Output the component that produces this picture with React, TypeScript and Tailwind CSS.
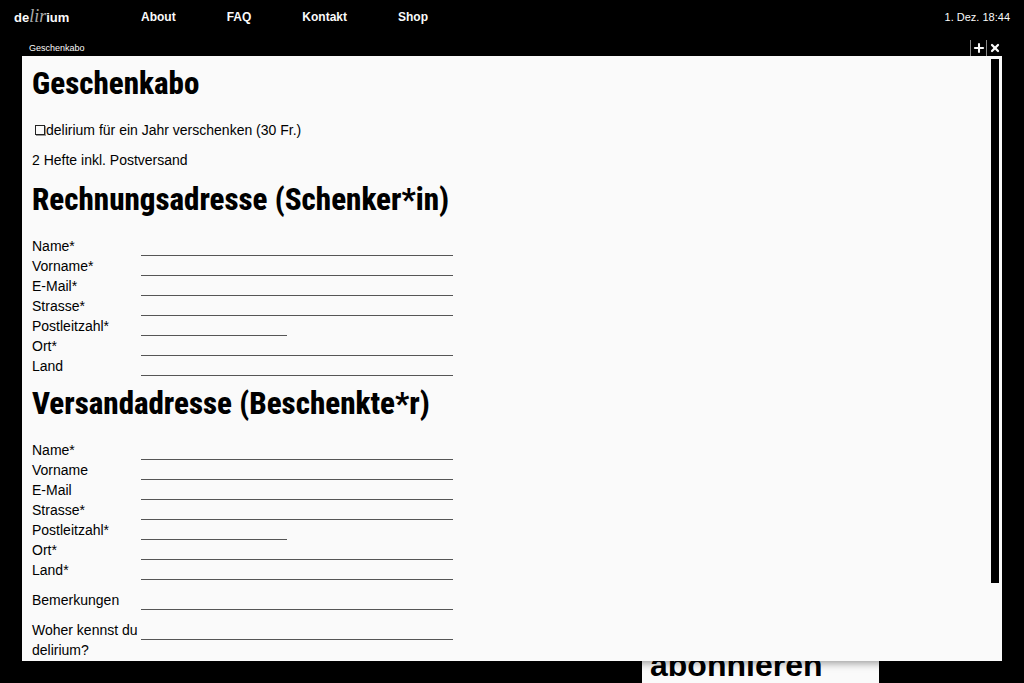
import { Plus, X } from "lucide-react";

type Field = { id: string; label: string; short?: boolean };

const billing: Field[] = [
  { id: "b-name", label: "Name*" },
  { id: "b-vorname", label: "Vorname*" },
  { id: "b-email", label: "E-Mail*" },
  { id: "b-strasse", label: "Strasse*" },
  { id: "b-plz", label: "Postleitzahl*", short: true },
  { id: "b-ort", label: "Ort*" },
  { id: "b-land", label: "Land" },
];

const shipping: Field[] = [
  { id: "s-name", label: "Name*" },
  { id: "s-vorname", label: "Vorname" },
  { id: "s-email", label: "E-Mail" },
  { id: "s-strasse", label: "Strasse*" },
  { id: "s-plz", label: "Postleitzahl*", short: true },
  { id: "s-ort", label: "Ort*" },
  { id: "s-land", label: "Land*" },
];

const links = ["About", "FAQ", "Kontakt", "Shop"];

function Heading({ children }: { children: string }) {
  return (
    <h2 className="pt-0.5 font-['Liberation_Sans_Narrow','Roboto_Condensed','Liberation_Sans',sans-serif] text-[31px] leading-10 font-extrabold whitespace-nowrap">
      {children}
    </h2>
  );
}

function Row({ id, label, short }: Field) {
  return (
    <div className="flex items-start">
      <label htmlFor={id} className="w-[109px] shrink-0">
        {label}
      </label>
      <input
        id={id}
        type="text"
        className={
          short
            ? "h-5 w-[146px] border-b border-[#555] bg-transparent outline-none"
            : "h-5 min-w-0 flex-1 border-b border-[#555] bg-transparent outline-none"
        }
      />
    </div>
  );
}

export default function App() {
  return (
    <div className="relative flex h-screen flex-col overflow-hidden bg-black font-['Liberation_Sans',Arial,sans-serif] text-black">
      <header className="flex h-[39px] shrink-0 items-start px-3.5 pt-2 text-xs leading-[18px] text-[#fafafa]">
        <a href="#start" className="flex w-[127px] items-baseline text-[13px] leading-4 font-bold">
          de
          <span className="font-['Liberation_Serif',serif] text-lg leading-4 font-normal text-[#aaa] italic">lir</span>
          ium
        </a>
        <nav className="flex gap-[51px] font-bold">
          {links.map((l) => (
            <a key={l} href={`#${l.toLowerCase()}`}>
              {l}
            </a>
          ))}
        </nav>
        <time className="ml-auto text-[11px] leading-[18px]">1. Dez. 18:44</time>
      </header>

      <aside className="absolute bottom-0 left-[642px] h-20 w-[237px] bg-[#fafafa] pt-10 pl-2">
        <p className="text-[32px] leading-11 font-bold">abonnieren</p>
      </aside>

      <section className="relative mx-[22px] mb-[22px] flex min-h-0 flex-1 flex-col shadow-[0_2px_8px_rgba(0,0,0,0.4)]">
        <div className="flex h-[17px] shrink-0 items-center bg-black pl-[7px] text-[#fafafa]">
          <h1 className="text-[9px] leading-4">Geschenkabo</h1>
          <div className="ml-auto flex h-4 items-center self-end">
            <button
              type="button"
              aria-label="Vergrössern"
              className="flex h-4 w-4 items-center justify-center border-l border-[#888]"
            >
              <Plus className="size-3.5" strokeWidth={3.5} />
            </button>
            <button
              type="button"
              aria-label="Schliessen"
              className="flex h-4 w-4 items-center justify-center border-l border-[#888]"
            >
              <X className="size-3" strokeWidth={4.5} />
            </button>
          </div>
        </div>

        <div className="flex min-h-0 flex-1 bg-[#fafafa]">
          <form className="min-w-0 flex-1 overflow-hidden px-2.5 pt-1.5 text-sm leading-5">
            <Heading>Geschenkabo</Heading>
            <label className="mt-4 flex items-center">
              <input
                type="checkbox"
                className="mr-px ml-[3px] size-2.5 shrink-0 appearance-none border border-[#222] bg-transparent shadow-[1px_1px_0_#999] checked:bg-black"
              />
              delirium für ein Jahr verschenken (30 Fr.)
            </label>
            <p className="mt-2.5">2 Hefte inkl. Postversand</p>

            <fieldset className="mt-2 w-[421px] max-w-full min-w-0">
              <Heading>Rechnungsadresse (Schenker*in)</Heading>
              <div className="mt-4">
                {billing.map((f) => (
                  <Row key={f.id} {...f} />
                ))}
              </div>
            </fieldset>

            <fieldset className="mt-1.5 w-[421px] max-w-full min-w-0">
              <Heading>Versandadresse (Beschenkte*r)</Heading>
              <div className="mt-4">
                {shipping.map((f) => (
                  <Row key={f.id} {...f} />
                ))}
              </div>
              <div className="mt-2.5 flex flex-col gap-2.5">
                <Row id="bemerkungen" label="Bemerkungen" />
                <Row id="woher" label="Woher kennst du delirium?" />
              </div>
            </fieldset>
          </form>
          <div className="w-[11px] shrink-0 pt-[3px] pr-[3px]">
            <div className="h-[87%] bg-black" />
          </div>
        </div>
      </section>
    </div>
  );
}
